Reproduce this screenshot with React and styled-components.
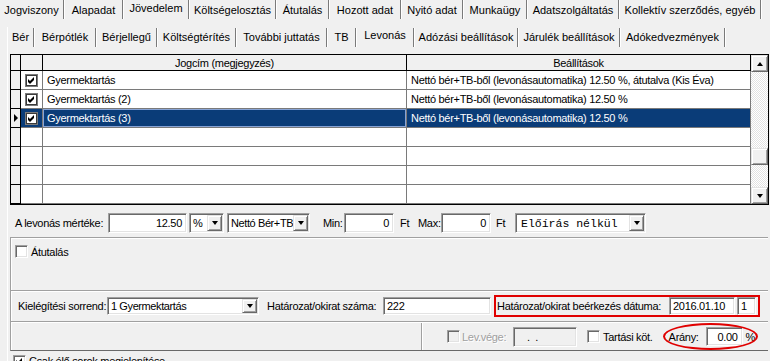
import React from 'react'
import styled, { createGlobalStyle, css } from 'styled-components'

const GlobalStyle = createGlobalStyle`
  html, body { margin: 0; padding: 0; background: #f0f0f0; }
  body {
    font-family: "Liberation Sans", Arial, sans-serif;
    font-size: 11px;
    letter-spacing: -0.3px;
    color: #000;
  }
`

const sunken = css`
  border: 1px solid;
  border-color: #a0a0a0 #fff #fff #a0a0a0;
  box-shadow: inset 1px 1px 0 #696969, inset -1px -1px 0 #e3e3e3;
`

const raised = css`
  background: #f0f0f0;
  border: 1px solid;
  border-color: #e3e3e3 #696969 #696969 #e3e3e3;
  box-shadow: inset 1px 1px 0 #fff, inset -1px -1px 0 #a0a0a0;
`

const Screen = styled.div`
  width: 770px;
  height: 361px;
  overflow: hidden;
  background: #f0f0f0;
`

const TabStrip = styled.div`
  display: flex;
  align-items: flex-start;
  height: 21px;
  margin-top: ${p => p.$top || 0}px;
`

const Tab = styled.div`
  flex: none;
  width: ${p => p.$w}px;
  height: 21px;
  line-height: 21px;
  text-align: center;
  white-space: nowrap;
  letter-spacing: 0;
  span {
    display: inline-block;
    transform: translateY(${p => (p.$active ? -2 : 0)}px);
  }
`

const TabSep = styled.div`
  width: 0;
  height: 19px;
  margin-top: ${p => p.$top || 0}px;
  border-left: 1px solid #7a7a7a;
  border-right: 1px solid #fff;
  flex: none;
`

const SubPanel = styled.div`
  margin-left: 7px;
  border-left: 1px solid #fff;
`

const Frame = styled.div`
  display: flex;
  width: 759px;
  height: 151px;
  margin: 6px 0 0 2px;
  border: 1px solid #000;
  box-sizing: border-box;
  background: #fff;
`

const Table = styled.div`
  display: flex;
  flex-direction: column;
`

const GridRow = styled.div`
  display: grid;
  grid-template-columns: 10px 22px 364px 344px;
  height: ${p => p.$h}px;
`

const Cell = styled.div`
  box-sizing: border-box;
  display: flex;
  align-items: center;
  justify-content: ${p => (p.$center ? 'center' : 'flex-start')};
  padding: 0 ${p => (p.$center ? 0 : 4)}px;
  border-right: 1px solid ${p => (p.$dark ? '#000' : '#7a7a7a')};
  border-bottom: 1px solid ${p => (p.$dark ? '#000' : '#7a7a7a')};
  background: ${p => (p.$gray ? '#f0f0f0' : p.$sel ? '#0a3c78' : '#fff')};
  color: ${p => (p.$sel ? '#fff' : '#000')};
  white-space: nowrap;
  overflow: hidden;
  ${p => p.$focus && css`box-shadow: inset 0 0 0 1px #86a3d6;`}
`

const Pointer = styled.span`
  width: 0;
  height: 0;
  border-top: 4px solid transparent;
  border-bottom: 4px solid transparent;
  border-left: 4px solid #000;
`

const Scrollbar = styled.div`
  width: 17px;
  display: flex;
  flex-direction: column;
  background: repeating-conic-gradient(#ffffff 0 25%, #e2e2e2 0 50%) 0 0 / 2px 2px;
`

const ScrollBtn = styled.div`
  box-sizing: border-box;
  height: 17px;
  ${raised}
  display: flex;
  align-items: center;
  justify-content: center;
  margin-top: ${p => (p.$bottom ? 'auto' : 0)};
`

const Thumb = styled.div`
  box-sizing: border-box;
  height: 17px;
  margin-top: 76px;
  ${raised}
`

const Arrow = styled.span`
  width: 0;
  height: 0;
  border-left: 3.5px solid transparent;
  border-right: 3.5px solid transparent;
  ${p => (p.$up
    ? css`border-bottom: 4px solid #000;`
    : css`border-top: 4px solid #000;`)}
`

const FieldRow = styled.div`
  display: flex;
  align-items: center;
  height: ${p => p.$h}px;
  margin: ${p => p.$mt || 0}px 0 0 ${p => p.$ml || 0}px;
  padding-left: ${p => p.$pl || 0}px;
  padding-bottom: ${p => p.$pb || 0}px;
`

const Label = styled.span`
  display: inline-block;
  flex: none;
  width: ${p => (p.$w ? `${p.$w}px` : 'auto')};
  margin-left: ${p => p.$ml || 0}px;
  white-space: nowrap;
  color: ${p => (p.$disabled ? '#a0a0a0' : '#000')};
  ${p => p.$disabled && css`text-shadow: 1px 1px 0 #fff;`}
`

const Input = styled.div`
  box-sizing: border-box;
  flex: none;
  width: ${p => p.$w}px;
  height: ${p => p.$h || 20}px;
  margin-left: ${p => p.$ml || 0}px;
  ${sunken}
  background: ${p => (p.$disabled ? '#f0f0f0' : '#fff')};
  display: flex;
  align-items: center;
  justify-content: ${p => (p.$right ? 'flex-end' : 'flex-start')};
  padding: 0 ${p => (p.$right ? 4 : 0)}px 0 ${p => p.$pl || 3}px;
  white-space: pre;
`

const Combo = styled.div`
  box-sizing: border-box;
  flex: none;
  width: ${p => p.$w}px;
  height: ${p => p.$h || 20}px;
  margin-left: ${p => p.$ml || 0}px;
  ${sunken}
  background: #fff;
  padding: 1px;
  display: flex;
`

const ComboText = styled.div`
  flex: 1;
  display: flex;
  align-items: center;
  padding-left: 2px;
  white-space: nowrap;
  overflow: hidden;
  letter-spacing: -0.4px;
  ${p => p.$mono && css`
    font-family: "Liberation Mono", "Courier New", monospace;
    font-size: 11.5px;
    letter-spacing: 0;
    padding-left: 4px;
  `}
`

const DropBtn = styled.div`
  box-sizing: border-box;
  flex: none;
  width: 15px;
  ${raised}
  display: flex;
  align-items: center;
  justify-content: center;
`

const Box = styled.span`
  box-sizing: border-box;
  flex: none;
  display: inline-flex;
  align-items: center;
  justify-content: center;
  width: 13px;
  height: 13px;
  margin-left: ${p => p.$ml || 0}px;
  background: ${p => (p.$disabled ? '#f0f0f0' : '#fff')};
  ${p => (p.$flat
    ? css`border: 1px solid #7a7a7a; box-shadow: inset 0 0 0 1px #3a3a3a;`
    : sunken)}
`

const EtchedLine = styled.div`
  height: 0;
  border-top: 1px solid #a0a0a0;
  border-bottom: 1px solid #fff;
`

const VSep = styled.div`
  align-self: stretch;
  width: 0;
  margin-left: ${p => p.$ml || 0}px;
  border-left: 1px solid #a0a0a0;
  border-right: 1px solid #fff;
`

const Group = styled.div`
  box-sizing: border-box;
  flex: none;
  display: flex;
  align-items: center;
  margin-left: ${p => p.$ml || 0}px;
  padding: ${p => p.$pad || 0};
  ${p => p.$marked && css`border: 2px solid #e00000;`}
`

const Oval = styled.div`
  position: relative;
  display: flex;
  align-items: center;
  margin-left: ${p => p.$ml || 0}px;
  padding-left: 6px;
  padding-right: 2px;
  height: 27px;
  &::after {
    content: '';
    position: absolute;
    left: 0;
    right: 0;
    top: 0;
    bottom: 0;
    border: 2px solid #e00000;
    border-radius: 50%;
    pointer-events: none;
  }
`

const Panel = styled.div`
  width: 757px;
  margin: 4px 0 0 2px;
  border-top: 1px solid #a0a0a0;
  border-left: 1px solid #a0a0a0;
  border-bottom: 1px solid #696969;
  box-shadow: inset 1px 1px 0 #fff;
`

const Section = styled.div`
  height: ${p => p.$h}px;
  padding: ${p => p.$pt || 0}px 0 0 ${p => p.$pl || 0}px;
  box-sizing: border-box;
  display: flex;
  align-items: flex-start;
`

const CheckLabel = styled.label`
  display: flex;
  align-items: center;
  gap: 3px;
  margin-left: ${p => p.$ml || 0}px;
  white-space: nowrap;
`

const CheckBox = ({ checked, flat, disabled, ml }) => (
  <Box $flat={flat} $disabled={disabled} $ml={ml}>
    {checked && (
      <svg width="7" height="7" viewBox="0 0 7 7">
        <polygon points="0,2 2,4 6,0 6,3 2,7 0,5" fill="#000" />
      </svg>
    )}
  </Box>
)

const DropDown = ({ w, h, ml, mono, children }) => (
  <Combo $w={w} $h={h} $ml={ml}>
    <ComboText $mono={mono}>{children}</ComboText>
    <DropBtn><Arrow /></DropBtn>
  </Combo>
)

const topTabs = [
  ['Jogviszony', 63], ['Alapadat', 57], ['Jövedelem', 64], ['Költségelosztás', 85],
  ['Átutalás', 51], ['Hozott adat', 70], ['Nyitó adat', 60], ['Munkaügy', 62],
  ['Adatszolgáltatás', 90], ['Kollektív szerződés, egyéb', 140],
]
const subTabs = [
  ['Bér', 25], ['Bérpótlék', 60], ['Bérjellegű', 59], ['Költségtérítés', 77],
  ['További juttatás', 89], ['TB', 27], ['Levonás', 56], ['Adózási beállítások', 102],
  ['Járulék beállítások', 100], ['Adókedvezmények', 103],
]

const rows = [
  { name: 'Gyermektartás', setting: 'Nettó bér+TB-ből (levonásautomatika) 12.50 %, átutalva (Kis Éva)' },
  { name: 'Gyermektartás (2)', setting: 'Nettó bér+TB-ből (levonásautomatika) 12.50 %' },
  { name: 'Gyermektartás (3)', setting: 'Nettó bér+TB-ből (levonásautomatika) 12.50 %', selected: true },
  {}, {}, {}, {},
]

const Tabs = ({ items, active, top, sepTop }) => (
  <TabStrip $top={top}>
    {items.map(([label, w], i) => (
      <React.Fragment key={label}>
        <Tab $w={w} $active={i === active}><span>{label}</span></Tab>
        <TabSep $top={sepTop} />
      </React.Fragment>
    ))}
  </TabStrip>
)

export default function App() {
  return (
    <Screen>
      <GlobalStyle />
      <Tabs items={topTabs} active={2} sepTop={0} />
      <SubPanel>
        <Tabs items={subTabs} active={6} top={6} sepTop={1} />

        <Frame>
          <Table>
            <GridRow $h={16}>
              <Cell $gray $dark />
              <Cell $gray $dark />
              <Cell $gray $dark $center>Jogcím (megjegyzés)</Cell>
              <Cell $gray $dark $center>Beállítások</Cell>
            </GridRow>
            {rows.map((r, i) => (
              <GridRow $h={19} key={i}>
                <Cell $gray $dark $center>{r.selected && <Pointer />}</Cell>
                <Cell $center $sel={r.selected}>{r.name && <CheckBox checked flat />}</Cell>
                <Cell $sel={r.selected} $focus={r.selected}>{r.name}</Cell>
                <Cell $sel={r.selected}>{r.setting}</Cell>
              </GridRow>
            ))}
          </Table>
          <Scrollbar>
            <ScrollBtn><Arrow $up /></ScrollBtn>
            <Thumb />
            <ScrollBtn $bottom><Arrow /></ScrollBtn>
          </Scrollbar>
        </Frame>

        <FieldRow $h={20} $mt={8} $ml={2} $pl={5}>
          <Label $w={93}>A levonás mértéke:</Label>
          <Input $w={79} $right>12.50</Input>
          <DropDown w={35} ml={2}>%</DropDown>
          <DropDown w={83} ml={3}>Nettó Bér+TB</DropDown>
          <Label $w={21} $ml={13}>Min:</Label>
          <Input $w={50} $right>0</Input>
          <Label $w={10} $ml={6}>Ft</Label>
          <Label $w={23} $ml={8}>Max:</Label>
          <Input $w={50} $right>0</Input>
          <Label $w={10} $ml={5}>Ft</Label>
          <DropDown w={131} ml={9} mono>Előírás nélkül</DropDown>
        </FieldRow>

        <Panel>
          <Section $h={52} $pt={7} $pl={4}>
            <CheckLabel><CheckBox />Átutalás</CheckLabel>
          </Section>
          <EtchedLine />
          <FieldRow $h={27} $pl={7} $pb={2}>
            <Label $w={89}>Kielégítési sorrend:</Label>
            <DropDown w={152} h={18}>1 Gyermektartás</DropDown>
            <Label $w={116} $ml={8}>Határozat/okirat száma:</Label>
            <Input $w={108} $h={18}>222</Input>
            <Group $marked $ml={3} $pad="0 2px 0 1px">
              <Label $w={172}>Határozat/okirat beérkezés dátuma:</Label>
              <Input $w={66} $h={18}>2016.01.10</Input>
              <Input $w={19} $h={18} $ml={2}>1</Input>
            </Group>
          </FieldRow>
          <EtchedLine />
          <FieldRow $h={27}>
            <VSep $ml={410} />
            <CheckBox disabled ml={24} />
            <Label $w={51} $ml={2} $disabled>Lev.vége:</Label>
            <Input $w={64} $disabled $pl={13}>.  .</Input>
            <CheckLabel $ml={10}><CheckBox />Tartási köt.</CheckLabel>
            <Oval $ml={10}>
              <Label $w={37}>Arány:</Label>
              <Input $w={37} $h={19} $right>0.00</Input>
              <Label $w={10} $ml={3}>%</Label>
            </Oval>
          </FieldRow>
        </Panel>

        <FieldRow $h={14} $mt={3} $pl={5}>
          <CheckLabel><CheckBox checked />Csak élő sorok megjelenítése</CheckLabel>
        </FieldRow>
      </SubPanel>
    </Screen>
  )
}
